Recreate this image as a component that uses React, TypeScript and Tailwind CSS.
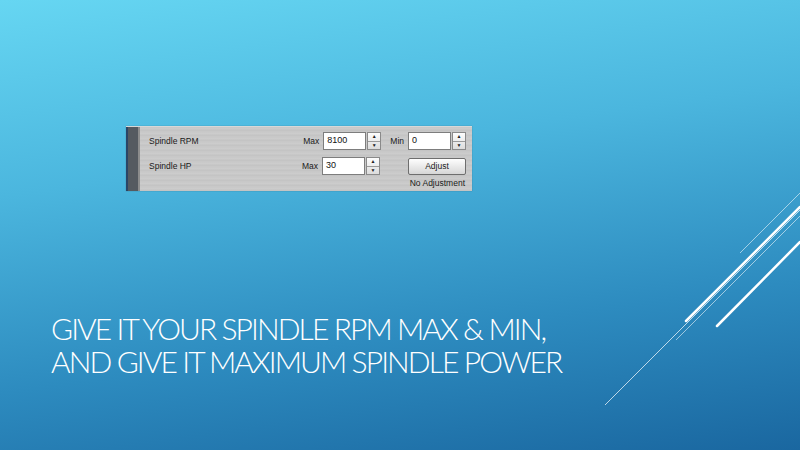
import React from "react";

function Spinner() {
  return (
    <div className="flex flex-col w-[14px] h-full border border-[#8a8a8a] bg-gradient-to-b from-[#fdfdfd] to-[#dcdcdc]">
      <div className="flex-1 flex items-center justify-center border-b border-[#9a9a9a] text-[5px] leading-none text-[#222]">▲</div>
      <div className="flex-1 flex items-center justify-center text-[5px] leading-none text-[#222]">▼</div>
    </div>
  );
}

function NumField({ value }: { value: string }) {
  return (
    <div className="flex h-[18px] w-[58px] gap-px">
      <div className="flex-1 flex items-center bg-white border border-[#7d7d7d] pl-[3px] text-[9px] text-[#111]">
        {value}
      </div>
      <Spinner />
    </div>
  );
}

export default function App() {
  const font = { fontFamily: '"Liberation Sans", Arial, sans-serif' };
  return (
    <div
      className="relative w-[800px] h-[450px] overflow-hidden bg-[linear-gradient(172deg,#66d6f2_0%,#4bb6de_35%,#2d8bbf_70%,#1a67a0_100%)]"
    >
      <svg className="absolute inset-0" width="800" height="450" viewBox="0 0 800 450">
        <line x1="740" y1="253" x2="800" y2="193" stroke="#ffffff" strokeOpacity="0.55" strokeWidth="1" />
        <line x1="686" y1="321" x2="800" y2="207" stroke="#ffffff" strokeWidth="2.5" strokeLinecap="round" />
        <line x1="605" y1="405" x2="800" y2="210" stroke="#ffffff" strokeOpacity="0.7" strokeWidth="1" />
        <line x1="676" y1="340" x2="800" y2="216" stroke="#ffffff" strokeOpacity="0.55" strokeWidth="1" />
        <line x1="717" y1="326" x2="800" y2="242" stroke="#ffffff" strokeWidth="2.5" strokeLinecap="round" />
      </svg>

      <div className="relative flex flex-col pl-[126px] pt-[126px]">
        <div
          className="flex w-[346px] h-[65px] border-t border-[#d8d8d8] shadow-[0_0_1px_rgba(0,0,0,0.3)]"
          style={font}
        >
          <div className="flex w-[14px] h-full">
            <div className="w-[2px] bg-[#2a4566]" />
            <div className="w-[10px] bg-[#555a60]" />
            <div className="w-[2px] bg-[#8c8c8c]" />
          </div>
          <div className="flex-1 flex flex-col pt-[5px] pl-[9px] pr-[6px] bg-[repeating-linear-gradient(180deg,#c8c8c8_0px,#cdcdcd_2px,#c2c2c2_3px,#cacaca_5px)] text-[8.5px] text-[#1a1a1a]">
            <div className="flex items-center h-[18px]">
              <div className="flex-1">Spindle RPM</div>
              <div className="mr-[4px]">Max</div>
              <NumField value="8100" />
              <div className="ml-[9px] mr-[4px]">Min</div>
              <NumField value="0" />
            </div>
            <div className="flex items-center h-[18px] mt-[7px]">
              <div className="flex-1">Spindle HP</div>
              <div className="mr-[4px]">Max</div>
              <NumField value="30" />
              <div className="ml-[28px] w-[58px] h-[17px] flex items-center justify-center rounded-[2px] border border-[#6e6e6e] bg-gradient-to-b from-[#fefefe] to-[#d6d6d6] text-[8.5px]">
                Adjust
              </div>
            </div>
            <div className="flex justify-end mt-[3px] pr-[1px] leading-[10px]">No Adjustment</div>
          </div>
        </div>

        <div
          className="mt-[121px] -ml-[75px] text-white text-[30px] leading-[33px] font-light tracking-[-1.9px]"
          style={{ fontFamily: 'Lato, "Open Sans", sans-serif' }}
        >
          <div>GIVE IT YOUR SPINDLE RPM MAX &amp; MIN,</div>
          <div>AND GIVE IT MAXIMUM SPINDLE POWER</div>
        </div>
      </div>
    </div>
  );
}
